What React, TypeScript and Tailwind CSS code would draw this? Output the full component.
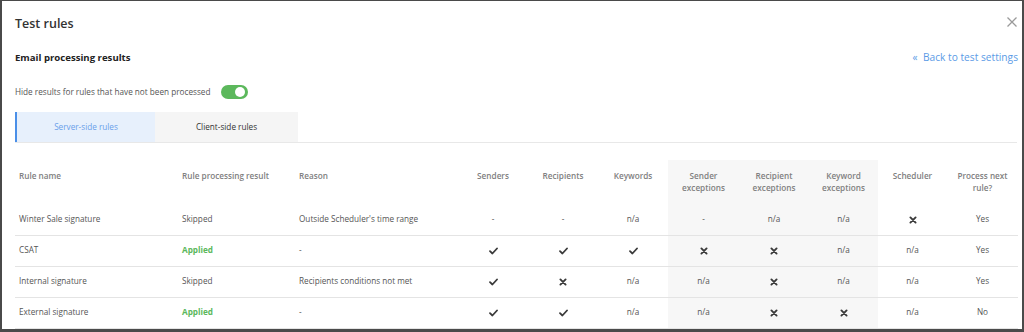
import React from "react";

const Check = () => (
  <svg width="9" height="8" viewBox="0 0 9 8" className="inline-block">
    <path d="M1 4.2 L3.4 6.5 L8 1.5" fill="none" stroke="#3a3a3a" strokeWidth="1.8" strokeLinecap="round" strokeLinejoin="round" />
  </svg>
);

const Cross = () => (
  <svg width="8" height="8" viewBox="0 0 8 8" className="inline-block">
    <path d="M1.4 1.4 L6.6 6.6 M6.6 1.4 L1.4 6.6" fill="none" stroke="#3a3a3a" strokeWidth="1.9" strokeLinecap="round" />
  </svg>
);

type Cell = string;

const rows: { name: string; result: string; reason: string; cells: Cell[] }[] = [
  { name: "Winter Sale signature", result: "Skipped", reason: "Outside Scheduler's time range", cells: ["-", "-", "n/a", "-", "n/a", "n/a", "x", "Yes"] },
  { name: "CSAT", result: "Applied", reason: "-", cells: ["v", "v", "v", "x", "x", "n/a", "n/a", "Yes"] },
  { name: "Internal signature", result: "Skipped", reason: "Recipients conditions not met", cells: ["v", "x", "n/a", "n/a", "x", "n/a", "n/a", "Yes"] },
  { name: "External signature", result: "Applied", reason: "-", cells: ["v", "v", "n/a", "n/a", "x", "x", "n/a", "No"] },
];

const renderCell = (c: Cell) => {
  if (c === "v") return <Check />;
  if (c === "x") return <Cross />;
  return c;
};

const headers: React.ReactNode[] = [
  "Senders",
  "Recipients",
  "Keywords",
  <>Sender<br />exceptions</>,
  <>Recipient<br />exceptions</>,
  <>Keyword<br />exceptions</>,
  "Scheduler",
  <>Process next<br />rule?</>,
];

const widths = [70, 70, 70, 71, 70, 69, 69, 71];

export default function App() {
  return (
    <div
      className="w-[1024px] h-[332px] overflow-hidden bg-white border-t border-l-2 border-r-2 border-b-[3px] border-[#4a4a4a] relative"
      style={{ fontFamily: '"Open Sans", "Noto Sans", sans-serif' }}
    >
      <div className="pl-[13px] pr-[4px]">
        <div className="flex items-center justify-between h-[46px] pt-[1px]">
          <div className="text-[12.5px] font-semibold text-[#333]">Test rules</div>
          <svg width="10" height="10" viewBox="0 0 10 10" className="mr-[1px] -mt-[6px]">
            <path d="M0.5 0.5 L9.5 9.5 M9.5 0.5 L0.5 9.5" stroke="#9a9a9a" strokeWidth="1.3" />
          </svg>
        </div>
        <div className="flex items-center justify-between h-[22px]">
          <div className="text-[9.6px] font-bold text-[#222]">Email processing results</div>
          <div className="text-[10.2px] text-[#5b9be6]">«&nbsp; Back to test settings</div>
        </div>
        <div className="flex items-center h-[43px] pt-[3px] gap-[11px]">
          <div className="text-[8.2px] text-[#555]">Hide results for rules that have not been processed</div>
          <div className="w-[27px] h-[14px] rounded-full bg-[#5cb85c] flex items-center justify-end pr-[3px]">
            <div className="w-[10px] h-[10px] rounded-full bg-white" />
          </div>
        </div>
        <div className="flex border-b border-[#e8e8e8] mr-[1px]">
          <div className="w-[140px] h-[30px] bg-[#e7f0fc] border-l-2 border-[#4a8fe8] flex items-center justify-center text-[8.2px] text-[#6a9fea]">
            Server-side rules
          </div>
          <div className="w-[143px] h-[30px] bg-[#f5f5f5] flex items-center justify-center text-[8.2px] text-[#333]">
            Client-side rules
          </div>
        </div>
        <table className="table-fixed border-collapse w-[1003px] mt-[17px] text-[8.2px]">
          <colgroup>
            <col style={{ width: 163 }} />
            <col style={{ width: 117 }} />
            <col style={{ width: 163 }} />
            {widths.map((w, i) => (
              <col key={i} style={{ width: w }} />
            ))}
          </colgroup>
          <thead>
            <tr>
              <th className="text-left align-top font-semibold text-[#808080] pl-[4px] pt-[10px] pb-[10px] leading-[12px]">Rule name</th>
              <th className="text-left align-top font-semibold text-[#808080] pl-[4px] pt-[10px] pb-[10px] leading-[12px]">Rule processing result</th>
              <th className="text-left align-top font-semibold text-[#808080] pl-[4px] pt-[10px] pb-[10px] leading-[12px]">Reason</th>
              {headers.map((h, i) => (
                <th
                  key={i}
                  className={`text-center align-top font-semibold text-[#808080] pt-[10px] pb-[10px] leading-[12px] ${i >= 3 && i <= 5 ? "bg-[#f7f7f7]" : ""}`}
                >
                  {h}
                </th>
              ))}
            </tr>
          </thead>
          <tbody>
            {rows.map((r, ri) => (
              <tr key={ri} className="border-b border-[#e4e4e4] h-[31px]">
                <td className="pl-[4px] text-[#555]">{r.name}</td>
                <td className={`pl-[4px] ${r.result === "Applied" ? "text-[#5cb85c] font-bold" : "text-[#555]"}`}>{r.result}</td>
                <td className="pl-[4px] text-[#555]">{r.reason}</td>
                {r.cells.map((c, ci) => (
                  <td
                    key={ci}
                    className={`text-center text-[#555] ${ci >= 3 && ci <= 5 ? "bg-[#f7f7f7]" : ""}`}
                  >
                    {renderCell(c)}
                  </td>
                ))}
              </tr>
            ))}
            <tr className="h-[10px]">
              <td colSpan={3} />
              {widths.map((_, ci) => (
                <td key={ci} className={ci >= 3 && ci <= 5 ? "bg-[#f7f7f7]" : ""} />
              ))}
            </tr>
          </tbody>
        </table>
      </div>
    </div>
  );
}
